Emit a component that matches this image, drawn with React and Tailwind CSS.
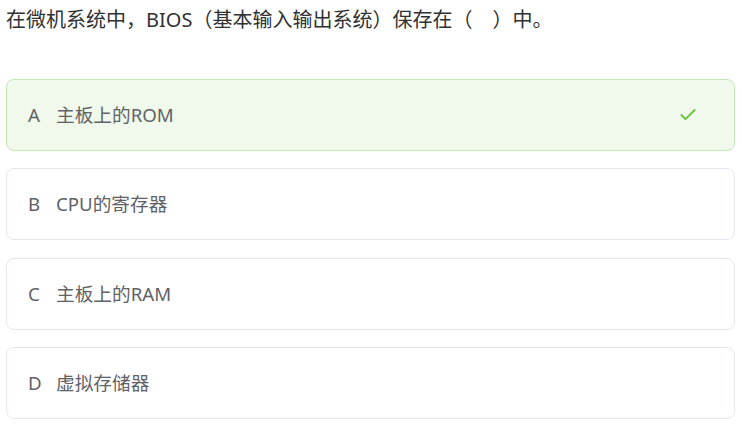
import { Check } from 'lucide-react'

const options = [
  { key: 'A', text: '主板上的ROM', correct: true },
  { key: 'B', text: 'CPU的寄存器' },
  { key: 'C', text: '主板上的RAM' },
  { key: 'D', text: '虚拟存储器' },
]

export default function App() {
  return (
    <div
      className="w-[742px] h-[425px] bg-white px-[6px] pt-[6px] text-[#303133]"
      style={{ fontFamily: '"Noto Sans", "Noto Sans CJK SC", sans-serif' }}
    >
      <p className="text-[20px] leading-[28px] whitespace-pre">在微机系统中，BIOS（基本输入输出系统）保存在（　）中。</p>

      <div className="mt-[45px] flex flex-col gap-[17.33px] w-[729px]">
        {options.map(opt => (
          <div
            key={opt.key}
            className={
              opt.correct
                ? 'h-[72px] rounded-[8px] border border-[#c2e7b0] bg-[#f0f9eb] flex items-center pl-[21px] pr-[36px] text-[#606266]'
                : 'h-[72px] rounded-[8px] border border-[#e4e7ed] bg-white flex items-center pl-[21px] pr-[36px] text-[#606266]'
            }
          >
            <span className="text-[18.67px] w-[28px]">{opt.key}</span>
            <span className="text-[18.67px] flex-1">{opt.text}</span>
            {opt.correct && <Check className="w-[20px] h-[20px] text-[#67c23a]" strokeWidth={2.2} />}
          </div>
        ))}
      </div>
    </div>
  )
}
